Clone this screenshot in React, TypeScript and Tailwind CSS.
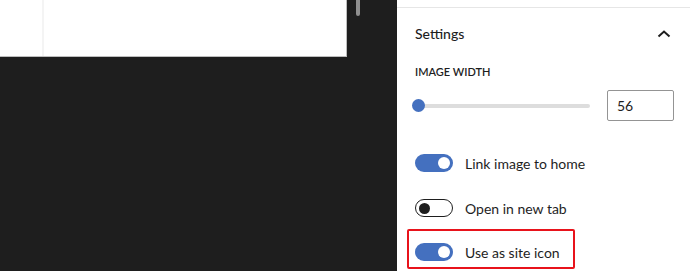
import React from "react";

function Toggle({ on }: { on: boolean }) {
  return (
    <span
      className={
        on
          ? "relative inline-flex h-[18px] w-[38px] shrink-0 items-center rounded-full bg-[#4470bf]"
          : "relative inline-flex h-[18px] w-[38px] shrink-0 items-center rounded-full border border-[#1e1e1e] bg-white"
      }
    >
      <span
        className={
          on
            ? "absolute right-[3px] h-[12px] w-[12px] rounded-full bg-white"
            : "absolute left-[3px] h-[11px] w-[11px] rounded-full bg-[#1e1e1e]"
        }
      />
    </span>
  );
}

export default function App() {
  return (
    <main
      className="flex h-[271px] w-[690px] overflow-hidden bg-[#1e1e1e] text-[#1e1e1e]"
      style={{ fontFamily: 'Lato, "Noto Sans", sans-serif' }}
    >
      {/* Canvas */}
      <div className="flex w-[397px] shrink-0 items-start">
        <div className="flex h-[57px] w-[347px] border-r border-b border-[#bdbdbd] bg-white">
          <div className="w-[44px] border-r-2 border-[#f4f4f4]" />
        </div>
        <div className="ml-[9px] h-[16px] w-[4px] rounded-b-full bg-[#8f8f8f]" />
      </div>

      {/* Sidebar */}
      <aside className="flex-1 bg-white">
        <div className="h-[7px]" />
        <div className="border-t border-[#e6e6e6] px-[18px]">
          <div className="flex h-[52px] items-center justify-between pb-[1px]">
            <span className="text-[14px] font-medium">Settings</span>
            <svg width="24" height="24" viewBox="0 0 24 24" className="-mr-[2px]">
              <path d="M6.5 14.5 12 9.5l5.5 5" fill="none" stroke="#1e1e1e" strokeWidth="2" />
            </svg>
          </div>
          <div className="mt-[4px] text-[11px] font-semibold uppercase leading-[16px]">Image width</div>
          <div className="mt-[10px] flex items-center">
            <div className="relative flex h-[30px] w-[180px] items-center">
              <div className="ml-[3px] h-[4px] w-[172px] rounded-full bg-[#dddddd]" />
              <div className="absolute left-[-3px] h-[13px] w-[13px] rounded-full bg-[#4470bf]" />
            </div>
            <div className="ml-[12px] flex h-[31px] w-[67px] items-center rounded-[2px] border border-[#949494] px-[9px] text-[14px]">
              56
            </div>
          </div>
          <div className="mt-[32px] flex flex-col">
            <label className="flex h-[20px] items-center gap-[12px] text-[14px]">
              <Toggle on />
              Link image to home
            </label>
            <label className="mt-[25px] flex h-[20px] items-center gap-[12px] text-[14px]">
              <Toggle on={false} />
              Open in new tab
            </label>
            <div className="relative mt-[24px]">
              <label className="flex h-[20px] items-center gap-[12px] text-[14px]">
                <Toggle on />
                Use as site icon
              </label>
              <div className="absolute left-[-8px] top-[-13px] h-[40px] w-[168px] rounded-[2px] border-2 border-[#e8131b]" />
            </div>
          </div>
        </div>
      </aside>
    </main>
  );
}
